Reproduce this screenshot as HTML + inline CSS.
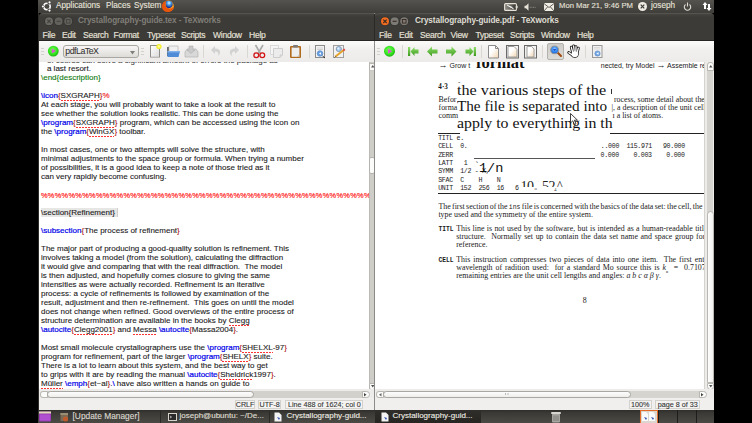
<!DOCTYPE html>
<html><head><meta charset="utf-8">
<style>
*{box-sizing:border-box}
body{margin:0;width:752px;height:423px;background:#000;position:relative;overflow:hidden;font-family:"Liberation Sans",sans-serif}
.a{position:absolute}
.t{position:absolute;white-space:pre;line-height:1}
#panel{left:38px;top:0;width:676px;height:13px;background:linear-gradient(#54534e,#3f3e3a)}
#panel .t{color:#e6e2d9;font-size:8.2px;top:2.3px;-webkit-text-stroke:0.12px #e6e2d9}
.win{top:13px;height:397px;background:linear-gradient(transparent 0,transparent 6px,#3c3b37 6px,#3c3b37 28px,#f0efed 28px);overflow:hidden}
.tb{left:0;top:0;right:0;height:28px;border-bottom:1px solid #262522;border-top:1px solid #55544f;background:linear-gradient(#45443f 0,#3c3b37 3px,#3c3b37 100%);border-radius:4px 4px 0 0}
.menu .t{color:#e6e2d9;font-size:8.6px;top:17.2px;letter-spacing:-0.3px;-webkit-text-stroke:0.15px #e6e2d9}
.title{font-size:8.2px;font-weight:bold;top:3.3px;letter-spacing:-0.1px}
.wbtn{width:8px;height:8px;border-radius:50%;top:3px;background:#5d5c57}
.toolbar{left:0;right:0;top:28px;height:21px;background:linear-gradient(#fbfbfa,#f1f0ee 40%,#ecebe9)}
.ed{left:0;top:49px;width:330px;height:327px;background:#fff;overflow:hidden}
.ln{position:absolute;left:2px;white-space:pre;font-size:8px;line-height:9px;color:#1a1a1a;-webkit-text-stroke:0.1px currentColor}
.b{color:#0000e8;-webkit-text-stroke:0.2px #0000e8}
.r{color:#b01010}
.g{color:#0a780a}
.p{color:#f21d1d;-webkit-text-stroke:0.15px #f21d1d}
.sel{background:#e6e6e5;padding-right:3px;box-shadow:inset -1px 0 #d0d0cf}
.u{background:linear-gradient(90deg,#f33 66%,transparent 66%) 0 100%/3px 1px repeat-x;padding-bottom:1px}
.status .box{position:absolute;top:1.5px;height:9px;border:1px solid #d3d1cc;background:#f4f3f2;font-size:7.2px;line-height:7.5px;text-align:center;color:#333;white-space:pre;-webkit-text-stroke:0.1px #333}
#taskbar{left:38px;top:410px;width:676px;height:13px;background:linear-gradient(#2f2e2b,#3b3a36 25%,#4a4944)}
#taskbar .t{color:#e6e2d9;font-size:8px;top:2.3px;-webkit-text-stroke:0.12px #e6e2d9}
</style></head><body>

<!-- top panel -->
<div id="panel" class="a">
  <svg class="a" style="left:2px;top:0px" width="14" height="13" viewBox="0 0 14 13"><circle cx="7" cy="6.5" r="3.2" fill="none" stroke="#fff" stroke-width="1.5"/><circle cx="2.9" cy="6.5" r="1.6" fill="#403f3b"/><circle cx="9.05" cy="2.95" r="1.6" fill="#403f3b"/><circle cx="9.05" cy="10.05" r="1.6" fill="#403f3b"/><circle cx="2.9" cy="6.5" r="1.1" fill="#fff"/><circle cx="9.5" cy="2.4" r="1.1" fill="#fff"/><circle cx="9.5" cy="10.6" r="1.1" fill="#fff"/></svg>
  <div class="t" style="left:18px">Applications</div>
  <div class="t" style="left:68px">Places</div>
  <div class="t" style="left:96px">System</div>
  <svg class="a" style="left:123px;top:0px" width="14" height="13" viewBox="0 0 14 13"><defs><radialGradient id="ffg" cx=".5" cy=".3" r=".6"><stop offset="0" stop-color="#d8f4ff"/><stop offset=".45" stop-color="#4aa0e8"/><stop offset="1" stop-color="#1a3090"/></radialGradient><radialGradient id="ffo" cx=".7" cy=".4" r=".7"><stop offset="0" stop-color="#ffd030"/><stop offset=".5" stop-color="#f58a1a"/><stop offset="1" stop-color="#d8400c"/></radialGradient></defs><circle cx="7" cy="6.2" r="5.9" fill="url(#ffo)"/><path d="M4.5 1.3 Q8 -0.2 11 2 Q12.3 4.2 11 6.5 Q9.5 8.5 7 8.2 Q5 7.8 4.8 5.5 Q5 3 4.5 1.3Z" fill="url(#ffg)"/><path d="M1.2 5 Q1.8 1.8 4.8 1 Q3.6 2.8 4.3 5.3 Q5.2 8.6 8.6 8.8 Q11.2 8.8 12.8 6.6 Q12.2 11 7.6 12.1 Q2.6 12.4 1.2 7.8Z" fill="#e8560e"/></svg>

  <svg class="a" style="left:466px;top:3px" width="14" height="8" viewBox="0 0 14 8"><defs><linearGradient id="gbat"><stop offset="0" stop-color="#8d8b85"/><stop offset=".5" stop-color="#6b6963"/><stop offset="1" stop-color="#2e2d2a"/></linearGradient></defs><rect x="0.6" y="0.6" width="11.8" height="6.8" rx="1" fill="url(#gbat)" stroke="#e6e2d8" stroke-width="1.1"/><circle cx="12.9" cy="4" r="1" fill="none" stroke="#e6e2d8" stroke-width=".8"/><path d="M3 2 L6.5 4.2 L5.6 3.3 L9.5 6 L7 3.5 L7.5 4.5Z" fill="#fff" stroke="#fff" stroke-width=".6"/></svg>
  <svg class="a" style="left:486px;top:3px" width="12" height="8" viewBox="0 0 12 8"><path d="M0.5 2.8 H2 L4.5 0.3 V7.7 L2 5.2 H0.5Z" fill="#e6e2d8"/><path d="M5.8 4.3 H12" stroke="#8a8882" stroke-width="1" stroke-dasharray="1 .6"/></svg>
  <svg class="a" style="left:506px;top:3px" width="10" height="8" viewBox="0 0 10 8"><rect width="10" height="8" fill="#efece4"/><path d="M0 0.5 L5 4.5 L10 0.5 M0 8 L3.5 4 M10 8 L6.5 4" stroke="#3c3b37" fill="none" stroke-width="0.8"/></svg>
  <div class="t" style="left:521px;font-size:7.7px">Mon Mar 21, 9:46 PM</div>
  <svg class="a" style="left:600px;top:2px" width="9" height="9" viewBox="0 0 9 9"><circle cx="4.5" cy="4.5" r="4.5" fill="#efece4"/><path d="M2.7 2.7 L6.3 6.3 M6.3 2.7 L2.7 6.3" stroke="#3c3b37" stroke-width="1.2"/></svg>
  <div class="t" style="left:613px">joseph</div>
  <svg class="a" style="left:645px;top:2px" width="9" height="9" viewBox="0 0 9 9"><path d="M2.5 2.5 A3.2 3.2 0 1 0 6.5 2.5" fill="none" stroke="#dfdbd2" stroke-width="1.1"/><path d="M4.5 0.5 V4.5" stroke="#dfdbd2" stroke-width="1.1"/></svg>
  <svg class="a" style="left:664px;top:1px" width="10" height="11" viewBox="0 0 10 11"><path d="M3 1 L0.5 4 H2 V8 H4 V4 H5.5Z" fill="#fff"/><path d="M7 10 L4.5 7 H6 V3 H8 V7 H9.5Z" fill="#fff"/></svg>
</div>

<!-- left window -->
<div id="lw" class="a win" style="left:38px;width:341px;border-left:1px solid #2e2d2a">
  <div class="a tb">
    <svg class="a" style="left:5px;top:2px" width="32" height="12" viewBox="0 0 32 12"><circle cx="5.0" cy="5.3" r="4.5" fill="#2c2b28"/><circle cx="5.0" cy="5.3" r="4" fill="#6a6964"/><circle cx="14.6" cy="5.3" r="4.5" fill="#2c2b28"/><circle cx="14.6" cy="5.3" r="4" fill="#62615c"/><circle cx="24.2" cy="5.3" r="4.5" fill="#2c2b28"/><circle cx="24.2" cy="5.3" r="4" fill="#62615c"/><path d="M3.3 3.6 L6.7 7 M6.7 3.6 L3.3 7" stroke="#45443f" stroke-width="1.1"/><path d="M12.6 5.3 H16.6" stroke="#45443f" stroke-width="1.1"/><rect x="22.4" y="3.5" width="3.6" height="3.6" fill="none" stroke="#45443f" stroke-width="0.9"/></svg>
    <div class="t title" style="left:39px;color:#807e78">Crystallography-guide.tex - TeXworks</div>
    <div class="menu">
      <div class="t" style="left:3.5px">File</div>
      <div class="t" style="left:23px">Edit</div>
      <div class="t" style="left:44px">Search</div>
      <div class="t" style="left:74.5px">Format</div>
      <div class="t" style="left:108px">Typeset</div>
      <div class="t" style="left:142px">Scripts</div>
      <div class="t" style="left:174px">Window</div>
      <div class="t" style="left:210px">Help</div>
    </div>
  </div>
  <div class="a toolbar">
    <svg class="a" style="left:2px;top:6px" width="4" height="9"><path d="M0 1.5H3M0 4.5H3M0 7.5H3" stroke="#d3d1cc"/></svg>
    <svg class="a" style="left:8px;top:4px" width="13" height="13" viewBox="0 0 13 13"><defs><radialGradient id="gp" cx=".45" cy=".4" r=".6"><stop offset="0" stop-color="#7dff5a"/><stop offset=".7" stop-color="#2fe01c"/><stop offset="1" stop-color="#20b010"/></radialGradient></defs><circle cx="6.3" cy="6.1" r="5.4" fill="url(#gp)"/><path d="M4.8 3.6 L8.9 6.1 L4.8 8.6Z" fill="#d95ad0"/></svg>
    <div class="a" style="left:24px;top:4px;width:75.5px;height:13px;border:1px solid #a9a7a2;border-radius:3px;background:linear-gradient(#f7f6f5,#dedcd8)"></div>
    <div class="t" style="left:26.3px;top:6.2px;font-size:8.8px;letter-spacing:-0.5px;color:#333;-webkit-text-stroke:0.05px #333">pdfLaTeX</div>
    <svg class="a" style="left:91px;top:10px" width="6" height="4"><path d="M0 0H5L2.5 3.5Z" fill="#807e7a"/></svg>
    <svg class="a" style="left:102px;top:6px" width="4" height="9"><path d="M0 1.5H3M0 4.5H3M0 7.5H3" stroke="#d3d1cc"/></svg>
    <!-- new doc -->
    <svg class="a" style="left:110px;top:2px" width="14" height="15" viewBox="0 0 14 15"><rect x="1.5" y="2.5" width="9" height="11.5" fill="#fafafa" stroke="#8f8d88"/><rect x="2" y="3" width="8" height="10.5" fill="url(#lg1)"/><defs><linearGradient id="lg1" x1="0" y1="0" x2="1" y2="1"><stop offset="0" stop-color="#fff"/><stop offset="1" stop-color="#dcdcdc"/></linearGradient></defs><circle cx="10" cy="3.5" r="2.6" fill="#f5ef2a"/><circle cx="10" cy="3.5" r="1.3" fill="#fffb9a"/></svg>
    <!-- open folder -->
    <svg class="a" style="left:127px;top:3.5px" width="15" height="13" viewBox="0 0 15 13"><path d="M1 2 H5 L6 3 H12 V11 H1Z" fill="#6b6b6b"/><rect x="3" y="1" width="9" height="7" fill="#f0f0f0" stroke="#aaa" stroke-width=".6"/><path d="M1.5 6 H14 L12.5 12 H1.5Z" fill="#4f8bd6"/><path d="M1.5 6 H14 L13.7 7.5 H1.5Z" fill="#7fb0ea"/></svg>
    <!-- save (disabled) -->
    <svg class="a" style="left:145px;top:3.5px" width="15" height="13" viewBox="0 0 15 13"><path d="M1 7 L3 4 H12 L14 7 V12 H1Z" fill="#d8d8d8" stroke="#b9b9b9" stroke-width=".8"/><path d="M5 1 H9 V5 H11 L7 8.5 L3 5 H5Z" fill="#c9c9c9" stroke="#b0b0b0" stroke-width=".6"/></svg>
    <div class="a" style="left:164px;top:4px;width:1px;height:13px;background:#dad8d3"></div>
    <!-- undo/redo disabled -->
    <svg class="a" style="left:171px;top:4px" width="12" height="13" viewBox="0 0 12 13"><path d="M5 1 L1 5 L5 9 V6.5 C8 6.5 9 8 8 11 C11 9 11.5 3.5 5 3.5Z" fill="#d2d2d2"/></svg>
    <svg class="a" style="left:189px;top:4px" width="12" height="13" viewBox="0 0 12 13"><path d="M7 1 L11 5 L7 9 V6.5 C4 6.5 3 8 4 11 C1 9 0.5 3.5 7 3.5Z" fill="#d2d2d2"/></svg>
    <div class="a" style="left:208px;top:4px;width:1px;height:13px;background:#dad8d3"></div>
    <!-- scissors -->
    <svg class="a" style="left:213px;top:3px" width="15" height="15" viewBox="0 0 15 15"><path d="M3.5 1 L8.5 9.5 M11 1 L6 9.5" stroke="#a9aaa8" stroke-width="1.6"/><circle cx="4.3" cy="11.3" r="2.4" fill="none" stroke="#d21414" stroke-width="1.3"/><circle cx="10.3" cy="11.3" r="2.4" fill="none" stroke="#d21414" stroke-width="1.3"/></svg>
    <!-- copy disabled -->
    <svg class="a" style="left:231px;top:4px" width="14" height="13" viewBox="0 0 14 13"><rect x="0.5" y="0.5" width="8" height="9" fill="#f5f5f5" stroke="#dadada"/><path d="M3.5 3.5 H12.5 V10 L10 12.5 H3.5Z" fill="#ececec" stroke="#cdcdcd"/><path d="M10 12.5 V10 H12.5" fill="#ddd" stroke="#c5c5c5" stroke-width=".6"/></svg>
    <!-- paste -->
    <svg class="a" style="left:250px;top:3px" width="14" height="15" viewBox="0 0 14 15"><rect x="1" y="2" width="11" height="12" rx="1" fill="#b06a1c"/><rect x="2.6" y="3.5" width="7.8" height="9.3" fill="#eeeeee"/><rect x="4" y="1" width="5" height="2.5" rx=".8" fill="#7a7a7a"/><path d="M8 12.8 L10.4 10.4 V12.8Z" fill="#bbb"/></svg>
    <div class="a" style="left:270px;top:4px;width:1px;height:13px;background:#dad8d3"></div>
    <!-- doc search -->
    <svg class="a" style="left:275px;top:3px" width="13" height="15" viewBox="0 0 13 15"><rect x="1.5" y="1.5" width="9" height="12" fill="#f4f4f4" stroke="#8b8b8b"/><path d="M3 4 H9 M3 5.5 H9" stroke="#bbb" stroke-width=".6"/><circle cx="6" cy="9.5" r="2.8" fill="#6aa1e0" stroke="#4a7fc0" stroke-width=".6"/><path d="M5 9.5 L7 8.3 V10.7Z" fill="#fff"/><path d="M8.5 12 L11 14" stroke="#333" stroke-width="1"/></svg>
    <!-- doc edit -->
    <svg class="a" style="left:293px;top:3px" width="14" height="15" viewBox="0 0 14 15"><rect x="1.5" y="1.5" width="10" height="12" fill="#f2f2f2" stroke="#a0a0a0"/><circle cx="6.8" cy="5" r="2.6" fill="#a9cdf2" stroke="#7a8da0" stroke-width=".8"/><circle cx="6.3" cy="4.4" r="1" fill="#e8f4ff"/><path d="M3.2 12.8 L11.8 6" stroke="#e3a22a" stroke-width="1.9"/><path d="M11.3 6.4 L12.8 5.2" stroke="#d44" stroke-width="1.9"/><path d="M2.6 13.4 L3.6 12.5" stroke="#444" stroke-width="1"/></svg>
  </div>
  <div class="a ed">
    <div class="ln" style="top:-6px;left:3.5px">  <span style="opacity:.85">of course can solve a significant amount of errors the package as</span></div>
    <div class="ln" style="top:2px;left:3.5px">  a last resort.</div>
    <div class="ln" style="top:11px"><span class="g">\end{description}</span></div>
    <div class="ln" style="top:20px"></div>
    <div class="ln" style="top:29px"><span class="b">\icon</span><span class="r">{</span><span class="u">SXGRAPH</span><span class="r">}</span><span class="p">%</span></div>
    <div class="ln" style="top:38px">At each stage, you will probably want to take a look at the result to</div>
    <div class="ln" style="top:47px">see whether the solution looks realistic. This can be done using the</div>
    <div class="ln" style="top:56px"><span class="b">\program</span><span class="r">{</span><span class="u">SXGRAPH</span><span class="r">}</span> program, which can be accessed using the icon on</div>
    <div class="ln" style="top:65px">the <span class="b">\program</span><span class="r">{</span><span class="u">WinGX</span><span class="r">}</span> toolbar.</div>
    <div class="ln" style="top:74px"></div>
    <div class="ln" style="top:83px">In most cases, one or two attempts will solve the structure, with</div>
    <div class="ln" style="top:92px">minimal adjustments to the space group or formula. When trying a number</div>
    <div class="ln" style="top:101px">of possibilities, it is a good idea to keep a note of those tried as it</div>
    <div class="ln" style="top:110px">can very rapidly become confusing.</div>
    <div class="ln" style="top:119px"></div>
    <div class="ln" style="top:128px"><span class="p" style="font-size:7.4px;letter-spacing:0.3px;position:relative;top:0.6px;-webkit-text-stroke:0.2px #ff2222;color:#ff2222">%%%%%%%%%%%%%%%%%%%%%%%%%%%%%%%%%%%%%%%%%%%%%%%%%%%%%%%%%%%%</span></div>
    <div class="ln" style="top:137px"></div>
    <div class="ln" style="top:146px"><span class="sel">\section{Refinement}</span></div>
    <div class="ln" style="top:155px"></div>
    <div class="ln" style="top:164px"><span class="b">\subsection</span><span class="r">{</span>The process of refinement<span class="r">}</span></div>
    <div class="ln" style="top:173px"></div>
    <div class="ln" style="top:182px">The major part of producing a good-quality solution is refinement. This</div>
    <div class="ln" style="top:191px">involves taking a model (from the solution), calculating the diffraction</div>
    <div class="ln" style="top:200px">it would give and comparing that with the real diffraction.  The model</div>
    <div class="ln" style="top:209px">is then adjusted, and hopefully comes closure to giving the same</div>
    <div class="ln" style="top:218px">intensities as were actually recorded. Refinement is an iterative</div>
    <div class="ln" style="top:227px">process: a cycle of refinements is followed by examination of the</div>
    <div class="ln" style="top:236px">result, adjustment and then re-refinement.  This goes on until the model</div>
    <div class="ln" style="top:245px">does not change when refined. Good overviews of the entire process of</div>
    <div class="ln" style="top:254px">structure determination are available in the books by <span class="u">Clegg</span></div>
    <div class="ln" style="top:263px"><span class="b">\autocite</span><span class="r">{</span><span class="u">Clegg2001</span><span class="r">}</span> and <span class="u">Messa</span> <span class="b">\autocite</span><span class="r">{</span>Massa2004<span class="r">}</span>.</div>
    <div class="ln" style="top:272px"></div>
    <div class="ln" style="top:281px">Most small molecule crystallographers use the <span class="b">\program</span><span class="r">{</span><span class="u">SHELXL</span>-97<span class="r">}</span></div>
    <div class="ln" style="top:290px">program for refinement, part of the larger <span class="b">\program</span><span class="r">{</span><span class="u">SHELX</span><span class="r">}</span> suite.</div>
    <div class="ln" style="top:299px">There is a lot to learn about this system, and the best way to get</div>
    <div class="ln" style="top:308px">to grips with it are by reading the manual <span class="b">\autocite</span><span class="r">{</span><span class="u">Sheldrick</span>1997<span class="r">}</span>.</div>
    <div class="ln" style="top:317px"><span class="u">Müller</span> <span class="b">\emph</span><span class="r">{</span>et~al<span class="r">}</span>.<span class="b">\</span> have also written a hands on guide to</div>
    <div class="ln" style="top:326px"><span style="opacity:.8">their use that includes some examples of many structures</span></div>
  </div>

  <!-- left v scrollbar -->
  <div class="a" style="left:329.5px;top:49px;width:6px;height:328px;background:#cfcdc8;border-left:1px solid #bcbab5"></div>
  <div class="a" style="left:330px;top:49.5px;width:6px;height:8px;background:#fbfbfa;border:1px solid #b5b3ae;border-bottom-color:#c9c7c2;border-radius:2px 2px 0 0"></div>
  <svg class="a" style="left:331.5px;top:52px" width="4" height="3"><path d="M0 2.5H3.5L1.75 0Z" fill="#555"/></svg>
  <div class="a" style="left:330px;top:144px;width:6px;height:17px;background:#fbfbfa;border:1px solid #b5b3ae;border-radius:2px"></div>
  <div class="a" style="left:330px;top:369.5px;width:6px;height:7px;background:#fbfbfa;border:1px solid #b5b3ae;border-radius:0 0 2px 2px"></div>
  <svg class="a" style="left:331.5px;top:372px" width="4" height="3"><path d="M0 0H3.5L1.75 2.5Z" fill="#555"/></svg>
  <!-- left h scrollbar -->
  <div class="a" style="left:0;top:376px;width:336px;height:9px;background:#edecea"></div>
  <div class="a" style="left:0.5px;top:378px;width:329px;height:6.5px;background:#d3d1cc;border-radius:3px"></div>
  <div class="a" style="left:0.5px;top:378px;width:8px;height:6.5px;background:#fbfbfa;border:1px solid #b9b7b2;border-radius:3px 0 0 3px"></div>
  <div class="a" style="left:7.5px;top:377.5px;width:207px;height:7px;background:linear-gradient(#fdfdfd,#efeeec);border:1px solid #a9a7a2;border-radius:3.5px"></div>
  <div class="a" style="left:323px;top:377.5px;width:7.5px;height:7px;background:#fbfbfa;border:1px solid #b9b7b2;border-radius:0 3.5px 3.5px 0"></div>
  <svg class="a" style="left:325.3px;top:379.5px" width="3" height="4"><path d="M0 0V3.5L2.5 1.75Z" fill="#444"/></svg>
  <div class="a status" style="left:0;right:0;top:385px;height:12px;background:#f0efed">
    <div class="box" style="left:195.7px;width:20px">CRLF</div>
    <div class="box" style="left:219px;width:23.4px">UTF-8</div>
    <div class="box" style="left:246.4px;width:78px">Line 488 of 1624; col 0</div>
  </div>
</div>

<!-- right window -->
<div id="rw" class="a win" style="left:374px;width:340px;border-left:1px solid #8d8b87">
<div class="a" style="left:1px;top:0;right:0;bottom:0">
  <div class="a tb" style="left:-1px"><div class="a" style="left:1px;top:0;right:0;bottom:0">
    <svg class="a" style="left:4.2px;top:2px" width="32" height="12" viewBox="0 0 32 12"><circle cx="5.0" cy="5.3" r="4.5" fill="#2c2b28"/><circle cx="5.0" cy="5.3" r="4" fill="#f26d21"/><circle cx="14.6" cy="5.3" r="4.5" fill="#2c2b28"/><circle cx="14.6" cy="5.3" r="4" fill="#7c7a75"/><circle cx="24.2" cy="5.3" r="4.5" fill="#2c2b28"/><circle cx="24.2" cy="5.3" r="4" fill="#7c7a75"/><path d="M3.3 3.6 L6.7 7 M6.7 3.6 L3.3 7" stroke="#3a2a22" stroke-width="1.1"/><path d="M12.6 5.3 H16.6" stroke="#3a2a22" stroke-width="1.1"/><rect x="22.4" y="3.5" width="3.6" height="3.6" fill="none" stroke="#3a2a22" stroke-width="0.9"/></svg>
    <div class="t title" style="left:39px;color:#dfdbd2">Crystallography-guide.pdf - TeXworks</div>
    <div class="menu">
      <div class="t" style="left:3px">File</div>
      <div class="t" style="left:23px">Edit</div>
      <div class="t" style="left:44px">Search</div>
      <div class="t" style="left:74.5px">View</div>
      <div class="t" style="left:99.5px">Typeset</div>
      <div class="t" style="left:134px">Scripts</div>
      <div class="t" style="left:165px">Window</div>
      <div class="t" style="left:201px">Help</div>
    </div></div>
  </div>
  <div class="a toolbar" style="left:-1px"><div class="a" style="left:1px;top:0;right:0;bottom:0">
    <svg class="a" style="left:1px;top:6px" width="4" height="9"><path d="M0 1.5H3M0 4.5H3M0 7.5H3" stroke="#d3d1cc"/></svg>
    <svg class="a" style="left:7px;top:4px" width="13" height="13" viewBox="0 0 13 13"><circle cx="6.5" cy="6.2" r="5.5" fill="url(#gp)"/><path d="M5 3.7 L9.1 6.2 L5 8.7Z" fill="#d95ad0"/></svg>
    <div class="a" style="left:26px;top:4px;width:1px;height:13px;background:#dad8d3"></div>
    <svg class="a" style="left:31px;top:4px" width="13" height="13" viewBox="0 0 13 13"><defs><linearGradient id="ga" x1="0" y1="0" x2="0" y2="1"><stop offset="0" stop-color="#8fe06a"/><stop offset="1" stop-color="#3e9a1e"/></linearGradient></defs><rect x="1" y="2" width="2.2" height="9" fill="url(#ga)"/><path d="M3.5 6.5 L7.5 2 V4.5 H11.5 V8.5 H7.5 V11Z" fill="url(#ga)"/></svg>
    <svg class="a" style="left:50px;top:4px" width="13" height="13" viewBox="0 0 13 13"><path d="M1 6.5 L6 1.5 V4.5 H11.5 V8.5 H6 V11.5Z" fill="url(#ga)"/></svg>
    <svg class="a" style="left:69px;top:4px" width="13" height="13" viewBox="0 0 13 13"><path d="M11.5 6.5 L6.5 1.5 V4.5 H1 V8.5 H6.5 V11.5Z" fill="url(#ga)"/></svg>
    <svg class="a" style="left:88px;top:4px" width="13" height="13" viewBox="0 0 13 13"><rect x="9.8" y="2" width="2.2" height="9" fill="url(#ga)"/><path d="M9.5 6.5 L5.5 2 V4.5 H1.5 V8.5 H5.5 V11Z" fill="url(#ga)"/></svg>
    <div class="a" style="left:105px;top:4px;width:1px;height:13px;background:#dad8d3"></div>
    <svg class="a" style="left:112px;top:3px" width="12" height="15" viewBox="0 0 12 15"><defs><linearGradient id="gpg" x1="0" y1="0" x2="1" y2="1"><stop offset=".4" stop-color="#fff"/><stop offset="1" stop-color="#f2d5b0"/></linearGradient></defs><path d="M0.5 1.5 H7.5 L10.5 4.5 V14 H0.5Z" fill="url(#gpg)" stroke="#8a8a8a"/><path d="M7.5 1.5 V4.5 H10.5" fill="none" stroke="#8a8a8a"/></svg>
    <svg class="a" style="left:130px;top:3px" width="14" height="15" viewBox="0 0 14 15"><rect x="0.5" y="1.5" width="12" height="12.5" fill="none" stroke="#6a6a6a"/><path d="M2 2.5 H8 L11 5.5 V13 H2Z" fill="url(#gpg)" stroke="#8a8a8a" stroke-width=".8"/></svg>
    <svg class="a" style="left:148px;top:3px" width="14" height="15" viewBox="0 0 14 15"><rect x="0.5" y="1.5" width="12" height="12.5" fill="none" stroke="#6a6a6a"/><path d="M3 2.5 H7.5 L10 5 V13 H3Z" fill="url(#gpg)" stroke="#8a8a8a" stroke-width=".8"/></svg>
    <div class="a" style="left:166px;top:4px;width:1px;height:13px;background:#dad8d3"></div>
    <div class="a" style="left:170.5px;top:2px;width:17px;height:16.5px;border:1px solid #b3b1ac;border-radius:2px;background:linear-gradient(#cfcdc9,#dddbd7)"></div>
    <svg class="a" style="left:172.8px;top:3px" width="14" height="14" viewBox="0 0 14 14"><defs><radialGradient id="gmag" cx=".5" cy=".4" r=".6"><stop offset="0" stop-color="#9fd0ff"/><stop offset=".6" stop-color="#2f86f0"/><stop offset="1" stop-color="#1f5fc8"/></radialGradient></defs><path d="M8.3 8.3 L12 12" stroke="#a04a10" stroke-width="2" stroke-linecap="round"/><circle cx="5.6" cy="5.9" r="3.9" fill="url(#gmag)" stroke="#9a9a9a" stroke-width="1.1"/><path d="M3.9 5 H7.3 L5.6 7.2Z" fill="#1a4fd0"/></svg>
    <svg class="a" style="left:190.5px;top:3px" width="14" height="15" viewBox="0 0 14 15"><path d="M6.0 9.5 L4.3 3.2" stroke="#111" stroke-width="2.9" stroke-linecap="round"/><path d="M7.4 9.0 L6.6 2.0" stroke="#111" stroke-width="2.9" stroke-linecap="round"/><path d="M8.8 9.0 L9.0 2.6" stroke="#111" stroke-width="2.9" stroke-linecap="round"/><path d="M10.0 9.5 L11.3 4.2" stroke="#111" stroke-width="2.9" stroke-linecap="round"/><path d="M5.5 11.0 L1.8 8.6" stroke="#111" stroke-width="2.9" stroke-linecap="round"/><ellipse cx="7.8" cy="10.3" rx="3.6" ry="3.2" fill="#fff" stroke="#111" stroke-width=".9"/><path d="M6.0 9.5 L4.3 3.2" stroke="#fff" stroke-width="1.3" stroke-linecap="round"/><path d="M7.4 9.0 L6.6 2.0" stroke="#fff" stroke-width="1.3" stroke-linecap="round"/><path d="M8.8 9.0 L9.0 2.6" stroke="#fff" stroke-width="1.3" stroke-linecap="round"/><path d="M10.0 9.5 L11.3 4.2" stroke="#fff" stroke-width="1.3" stroke-linecap="round"/><path d="M5.5 11.0 L1.8 8.6" stroke="#fff" stroke-width="1.3" stroke-linecap="round"/><ellipse cx="7.8" cy="10.3" rx="3.1" ry="2.7" fill="#fff"/></svg>
    <div class="a" style="left:209px;top:4px;width:1px;height:13px;background:#dad8d3"></div>
    <svg class="a" style="left:215px;top:3px" width="13" height="15" viewBox="0 0 13 15"><rect x="1.5" y="1.5" width="9.5" height="12" fill="#f0f0f0" stroke="#999"/><path d="M3 3.5 H9 M3 5 H9" stroke="#ccc" stroke-width=".6"/><circle cx="6.5" cy="9.5" r="2.6" fill="#7aaae5" stroke="#4a7fc0" stroke-width=".6"/><path d="M5.5 9.5 L7.5 8.3 V10.7Z" fill="#fff"/></svg></div>
  </div>
  <div class="a" style="left:-1px;top:49px;width:1px;height:327px;background:#fff"></div>
  <div class="a pdf" style="left:0;top:49px;width:328px;height:327px;background:#fff;overflow:hidden;color:#1a1a1a">
<div class="t" style="left:62.6px;top:-0.7px;font-size:7.00px;font-family:'Liberation Sans',sans-serif;color:#222"><span style="font-size:9px">→</span> Grow t</div>
<div class="t" style="left:99.9px;top:-7.4px;font-size:16.50px;font-family:'Liberation Serif',serif;font-weight:bold;color:#111">format</div>
<div class="t" style="left:224.8px;top:-1.1px;font-size:7.00px;font-family:'Liberation Sans',sans-serif;color:#222">nected, try Model <span style="font-size:9px">→</span> Assemble re</div>
<div class="t" style="left:62.3px;top:21.7px;font-size:7.20px;font-family:'Liberation Serif',serif;font-weight:bold">4·3</div>
<div class="t" style="left:62.5px;top:33.6px;font-size:7.90px;font-family:'Liberation Serif',serif;">Befor</div>
<div class="t" style="left:62.5px;top:42.1px;font-size:7.90px;font-family:'Liberation Serif',serif;">forma</div>
<div class="t" style="left:62.5px;top:49.9px;font-size:7.90px;font-family:'Liberation Serif',serif;">comm</div>
<div class="t" style="left:81.3px;top:21.0px;font-size:14.50px;font-family:'Liberation Serif',serif;transform:scaleX(1.115);transform-origin:0 0;color:#111">the various steps of the</div>
<div class="t" style="left:80.7px;top:37.3px;font-size:14.50px;font-family:'Liberation Serif',serif;transform:scaleX(1.047);transform-origin:0 0;color:#111">The file is separated into</div>
<div class="t" style="left:81.3px;top:54.3px;font-size:14.50px;font-family:'Liberation Serif',serif;transform:scaleX(1.092);transform-origin:0 0;color:#111">apply to everything in th</div>
<div class="t" style="left:82.0px;top:17.3px;font-size:7.00px;font-family:'Liberation Serif',serif;">-</div>
<div class="t" style="left:237.9px;top:33.6px;font-size:7.90px;font-family:'Liberation Serif',serif;">rocess, some detail about the</div>
<div class="t" style="left:235.5px;top:41.9px;font-size:7.90px;font-family:'Liberation Serif',serif;">|, a description of the unit cell</div>
<div class="a" style="left:235.0px;top:27.0px;width:1.0px;height:5px;background:#333"></div>
<div class="t" style="left:236.5px;top:49.7px;font-size:7.90px;font-family:'Liberation Serif',serif;">ı a list of atoms.</div>
<div class="a" style="left:62.0px;top:71.0px;width:22.0px;height:1px;background:#222"></div>
<div class="a" style="left:233.6px;top:71.0px;width:95.4px;height:1px;background:#222"></div>
<div class="t" style="left:62.2px;top:74.1px;font-size:6.60px;font-family:'Liberation Mono',monospace;color:#1a1a1a;letter-spacing:-0.3px">TITL e.</div>
<div class="t" style="left:62.2px;top:82.1px;font-size:6.60px;font-family:'Liberation Mono',monospace;color:#1a1a1a;letter-spacing:-0.3px">CELL  0.</div>
<div class="t" style="left:62.2px;top:90.6px;font-size:6.60px;font-family:'Liberation Mono',monospace;color:#1a1a1a;letter-spacing:-0.3px">ZERR</div>
<div class="t" style="left:62.2px;top:98.6px;font-size:6.60px;font-family:'Liberation Mono',monospace;color:#1a1a1a;letter-spacing:-0.3px">LATT   1</div>
<div class="t" style="left:62.2px;top:106.9px;font-size:6.60px;font-family:'Liberation Mono',monospace;color:#1a1a1a;letter-spacing:-0.3px">SYMM  1/2 - X,</div>
<div class="t" style="left:62.2px;top:115.7px;font-size:6.60px;font-family:'Liberation Mono',monospace;color:#1a1a1a;letter-spacing:-0.3px">SFAC  C    H    N</div>
<div class="t" style="left:62.2px;top:124.1px;font-size:6.60px;font-family:'Liberation Mono',monospace;color:#1a1a1a;letter-spacing:-0.3px">UNIT  152  256  16   6</div>
<div class="t" style="left:224.8px;top:82.1px;font-size:6.60px;font-family:'Liberation Mono',monospace;color:#1a1a1a;letter-spacing:-0.3px">..000  115.971   90.000</div>
<div class="t" style="left:224.5px;top:90.6px;font-size:6.60px;font-family:'Liberation Mono',monospace;color:#1a1a1a;letter-spacing:-0.3px">0.000    0.003    0.000</div>
<div class="a" style="left:98.1px;top:96.0px;width:121.0px;height:1px;background:#555"></div>
<div class="t" style="left:103.0px;top:99.8px;font-size:13.50px;font-family:'Liberation Mono',monospace;color:#111">1/n</div>
<div class="t" style="left:99.5px;top:98.7px;font-size:9.00px;font-family:'Liberation Serif',serif;color:#333">`</div>
<div class="a" style="left:144.0px;top:117.0px;width:50px;height:8px;overflow:hidden">
<div class="t" style="left:0.6px;top:1px;font-size:14px;font-family:Liberation Serif,serif;color:#222">1</div>
<div class="t" style="left:7.0px;top:1px;font-size:14px;font-family:Liberation Serif,serif;color:#222">0</div>
<div class="t" style="left:22.0px;top:1px;font-size:14px;font-family:Liberation Serif,serif;color:#222">5</div>
<div class="t" style="left:28.5px;top:1px;font-size:14px;font-family:Liberation Serif,serif;color:#222">2</div>
<div class="t" style="left:36.5px;top:1px;font-size:14px;font-family:Liberation Serif,serif;color:#222">^</div>
</div>
<div class="t" style="left:158.6px;top:124.0px;font-size:5.00px;font-family:'Liberation Serif',serif;color:#444">o</div>
<div class="t" style="left:177.9px;top:125.0px;font-size:5.00px;font-family:'Liberation Serif',serif;color:#444">4</div>
<div class="a" style="left:62.0px;top:131.0px;width:267.0px;height:1px;background:#222"></div>
<div class="t" style="left:62.4px;top:140.9px;font-size:7.90px;font-family:'Liberation Serif',serif;word-spacing:-0.6px">The first section of the <span style="font-family:Liberation Mono;font-size:6.5px">ins</span> file is concerned with the basics of the data set: the cell, the</div>
<div class="t" style="left:62.4px;top:148.9px;font-size:7.90px;font-family:'Liberation Serif',serif;">type used and the symmetry of the entire system.</div>
<div class="t" style="left:62.4px;top:165.2px;font-size:6.30px;font-family:'Liberation Mono',monospace;"><b>TITL</b></div>
<div class="t" style="left:80.2px;top:163.4px;font-size:7.90px;font-family:'Liberation Serif',serif;word-spacing:0.4px">This line is not used by the software, but is intended as a human-readable title of the</div>
<div class="t" style="left:80.2px;top:171.3px;font-size:7.90px;font-family:'Liberation Serif',serif;word-spacing:0.75px">structure.  Normally set up to contain the data set name and space group for</div>
<div class="t" style="left:80.2px;top:179.2px;font-size:7.90px;font-family:'Liberation Serif',serif;">reference.</div>
<div class="t" style="left:62.4px;top:195.5px;font-size:6.30px;font-family:'Liberation Mono',monospace;"><b>CELL</b></div>
<div class="t" style="left:80.2px;top:193.7px;font-size:7.90px;font-family:'Liberation Serif',serif;word-spacing:1px">This instruction compresses two pieces of data into one item.  The first entry</div>
<div class="t" style="left:80.2px;top:201.6px;font-size:7.90px;font-family:'Liberation Serif',serif;word-spacing:0.9px">wavelength of radition used:  for a standard Mo source this is <i>k</i><sub style="font-size:4px">α</sub>&nbsp; =&nbsp; 0.71073</div>
<div class="t" style="left:80.2px;top:209.6px;font-size:7.90px;font-family:'Liberation Serif',serif;">remaining entries are the unit cell lengths and angles: <i>a b c α β γ</i>.</div>
<div class="t" style="left:206.7px;top:235.3px;font-size:7.90px;font-family:'Liberation Serif',serif;">8</div>
<!--endpdf-->
  </div>

  <!-- right v scrollbar -->
  <div class="a" style="left:328px;top:49px;width:11px;height:329px;background:#edecea;border-left:1px solid #d5d3ce"></div>
  <div class="a" style="left:331px;top:57px;width:6px;height:150px;background:#d6d4cf"></div>
  <div class="a" style="left:330.5px;top:49px;width:7px;height:9px;background:#fbfbfa;border:1px solid #b9b7b2;border-radius:3px 3px 0 0"></div>
  <svg class="a" style="left:332.5px;top:52px" width="4" height="3"><path d="M0 2.5H3.5L1.75 0Z" fill="#555"/></svg>
  <div class="a" style="left:330.5px;top:198px;width:7px;height:172px;background:linear-gradient(90deg,#fdfdfd,#f1f0ee);border:1px solid #b9b7b2;border-radius:3.5px 3.5px 0 0"></div>
  <div class="a" style="left:330.5px;top:369.5px;width:7px;height:7.5px;background:#fbfbfa;border:1px solid #b9b7b2;border-radius:0 0 3.5px 3.5px"></div>
  <svg class="a" style="left:332.5px;top:372px" width="4" height="3"><path d="M0 0H3.5L1.75 2.5Z" fill="#555"/></svg>
  <!-- right h scrollbar -->
  <div class="a" style="left:0;top:376px;width:339px;height:9px;background:#edecea"></div>
  <div class="a" style="left:0;top:378px;width:330px;height:6.5px;background:#d6d4cf;border-radius:3px"></div>
  <div class="a" style="left:0;top:378px;width:8px;height:6.5px;background:#fbfbfa;border:1px solid #b9b7b2;border-radius:3px 0 0 3px"></div>
  <svg class="a" style="left:2.5px;top:379.5px" width="3" height="4"><path d="M2.5 0V3.5L0 1.75Z" fill="#666"/></svg>
  <div class="a" style="left:6.5px;top:377.5px;width:248px;height:7px;background:linear-gradient(#fdfdfd,#efeeec);border:1px solid #a9a7a2;border-radius:3.5px"></div>
  <svg class="a" style="left:129px;top:380px" width="4" height="2"><path d="M0.5 0V2M3 0V2" stroke="#aaa" stroke-width=".8"/></svg>
  <div class="a" style="left:322.5px;top:377.5px;width:8px;height:7px;background:#fbfbfa;border:1px solid #b9b7b2;border-radius:0 3.5px 3.5px 0"></div>
  <svg class="a" style="left:325px;top:379.5px" width="3" height="4"><path d="M0 0V3.5L2.5 1.75Z" fill="#444"/></svg>
  <!-- cursor -->
  <svg class="a" style="left:194px;top:100px" width="8" height="12" viewBox="0 0 8 12"><path d="M0.5 0.5 V10 L2.8 7.8 L4.5 11.5 L6 10.8 L4.4 7.2 H7.5Z" fill="#fff" stroke="#111" stroke-width=".8"/></svg>
  <div class="a status" style="left:0;right:0;top:385px;height:12px;background:#f0efed">
    <div class="box" style="left:252.5px;width:23.5px">100%</div>
    <div class="box" style="left:279px;width:45.4px">page 8 of 33</div>
  </div>
</div>
</div>

<div class="a" style="left:374px;top:14px;width:1px;height:27px;background:#2a2926"></div>
<!-- taskbar -->
<div id="taskbar" class="a">
  <svg class="a" style="left:1px;top:1px" width="12" height="11" viewBox="0 0 12 11"><rect x="0" y="0.5" width="12" height="10" rx="1" fill="#9a3cb4"/><rect x="0" y="0.5" width="12" height="2" fill="#e0d8b8"/><rect x="1" y="3.5" width="10" height="6" fill="#b04fd0"/></svg>
  
  <svg class="a" style="left:22px;top:2px" width="9" height="10" viewBox="0 0 9 10"><rect x="0.5" y="1" width="7.5" height="8" fill="#7b6a55"/><rect x="0.5" y="1" width="7.5" height="2" fill="#9d8c74"/><circle cx="5.5" cy="7" r="2.5" fill="#c05a2a"/></svg>
  <div class="t" style="left:34.5px;font-size:8.4px;color:#dfdbd2;-webkit-text-stroke:0.1px #dfdbd2">[Update Manager]</div>
  <div class="a" style="left:122px;top:1px;width:1px;height:12px;background:#2a2926"></div>
  <svg class="a" style="left:129.5px;top:3px" width="9" height="8" viewBox="0 0 9 8"><rect x="0.5" y="0.5" width="8" height="7" fill="#2a2a2a" stroke="#d8d4cc"/><path d="M2 3 L3.5 4 L2 5" stroke="#eee" fill="none" stroke-width=".7"/></svg>
  <div class="t" style="left:141.5px;color:#dfdbd2">joseph@ubuntu: ~/De...</div>
  <div class="a" style="left:231px;top:1px;width:1px;height:12px;background:#2a2926"></div>
  <svg class="a" style="left:236px;top:2px" width="8" height="10" viewBox="0 0 8 10"><path d="M0.5 0.5 H5 L7.5 3 V9.5 H0.5Z" fill="#f4f4f4"/><path d="M3 5 L5 8 L6 6Z" fill="#3050b0"/></svg>
  <div class="t" style="left:248.5px;color:#f2f0ea">Crystallography-guid...</div>
  <div class="a" style="left:337px;top:0;width:106px;height:13px;background:linear-gradient(#2f2e2b,#262522)"></div>
  <svg class="a" style="left:342.5px;top:2px" width="8" height="10" viewBox="0 0 8 10"><path d="M0.5 0.5 H5 L7.5 3 V9.5 H0.5Z" fill="#f4f4f4"/><path d="M3 5 L5 8 L6 6Z" fill="#3050b0"/></svg>
  <div class="t" style="left:354.5px;color:#f2f0ea">Crystallography-guid...</div>
  <svg class="a" style="left:512.5px;top:1px" width="10" height="12" viewBox="0 0 10 12"><rect x="1" y="2.5" width="8" height="9" rx="1" fill="#a8a6a0"/><rect x="0" y="1" width="10" height="2" rx="1" fill="#d8d6d0"/><path d="M3 4.5V10M5 4.5V10M7 4.5V10" stroke="#6e6c68" stroke-width=".7"/></svg>
  <div class="a" style="left:601.5px;top:0;width:18px;height:13px;background:#e36b2c"></div>
  <div class="a" style="left:602.5px;top:1px;width:16px;height:12px;background:#dbd7cf"></div>
  <svg class="a" style="left:604px;top:2px" width="6" height="9" viewBox="0 0 6 9"><path d="M0 0H4L6 2V9H0Z" fill="#fafafa"/><path d="M2 5 L4 8 L5 6Z" fill="#3050b0"/></svg>
  <svg class="a" style="left:611px;top:2px" width="6" height="9" viewBox="0 0 6 9"><path d="M0 0H4L6 2V9H0Z" fill="#fafafa"/><path d="M2 5 L4 8 L5 6Z" fill="#3050b0"/></svg>
  <div class="a" style="left:638.5px;top:0;width:1px;height:13px;background:#1e1d1b"></div>
  <div class="a" style="left:657.5px;top:0;width:1px;height:13px;background:#1e1d1b"></div>
  <div class="a" style="left:619.5px;top:0;width:1px;height:13px;background:#1e1d1b"></div>
</div>

</body></html>
